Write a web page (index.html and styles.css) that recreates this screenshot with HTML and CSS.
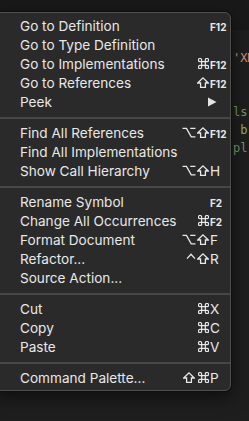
FILE: index.html
```html
<!DOCTYPE html>
<html lang="en">
<head>
    <meta charset="UTF-8">
    <meta name="viewport" content="width=device-width, initial-scale=1.0">
    <title>Editor context menu</title>
    <link rel="stylesheet" href="styles.css">
</head>
<body>
    <svg width="0" height="0" class="oculto">
        <defs>
            <path id="cmd" d="M4 9.8 V2.2 A1.8 1.8 0 1 0 2.2 4 H9.8 A1.8 1.8 0 1 0 8 2.2 V9.8 A1.8 1.8 0 1 0 9.8 8 H2.2 A1.8 1.8 0 1 0 4 9.8 Z"/>
            <path id="shift" d="M6 0.9 L11.2 6 H8.4 V10.3 H3.6 V6 H0.8 Z"/>
            <path id="opt" d="M0.3 1.4 H4.2 L9 9.9 H13.2 M8 1.4 H13.2"/>
            <path id="ctrl" d="M1 5.6 L5 1.2 L9 5.6"/>
        </defs>
    </svg>

    <div class="ventana">
        <div class="barra-pestanas"></div>
        <div class="editor">
            <div class="linea cadena">'XM</div>
            <div class="linea"> </div>
            <div class="linea"> </div>
            <div class="linea verde-gris">ls</div>
            <div class="linea verde"> b</div>
            <div class="linea verde-gris">pl</div>
        </div>

        <!-- menu contextual sobre el editor -->
        <div class="menu">
            <div class="item"><span class="etiqueta">Go to Definition</span><span class="atajo"><span class="tecla fn">F12</span></span></div>
            <div class="item"><span class="etiqueta">Go to Type Definition</span></div>
            <div class="item"><span class="etiqueta">Go to Implementations</span><span class="atajo"><span class="mod"><svg width="11" height="11" viewBox="0 0 12 12"><use href="#cmd"/></svg></span><span class="tecla fn">F12</span></span></div>
            <div class="item"><span class="etiqueta">Go to References</span><span class="atajo"><span class="mod"><svg width="12" height="11" viewBox="0 0 12 11"><use href="#shift"/></svg></span><span class="tecla fn">F12</span></span></div>
            <div class="item"><span class="etiqueta">Peek</span><span class="atajo"><svg class="flecha" width="10" height="10" viewBox="0 0 10 10"><path d="M1 0.5 L9.5 5 L1 9.5 Z" fill="#e4e4e4"/></svg></span></div>
            <div class="separador"></div>
            <div class="item"><span class="etiqueta">Find All References</span><span class="atajo"><span class="mod"><svg width="14" height="11" viewBox="0 0 13.5 11"><use href="#opt"/></svg></span><span class="mod"><svg width="12" height="11" viewBox="0 0 12 11"><use href="#shift"/></svg></span><span class="tecla fn">F12</span></span></div>
            <div class="item"><span class="etiqueta">Find All Implementations</span></div>
            <div class="item"><span class="etiqueta">Show Call Hierarchy</span><span class="atajo"><span class="mod"><svg width="14" height="11" viewBox="0 0 13.5 11"><use href="#opt"/></svg></span><span class="mod"><svg width="12" height="11" viewBox="0 0 12 11"><use href="#shift"/></svg></span><span class="tecla">H</span></span></div>
            <div class="separador"></div>
            <div class="item"><span class="etiqueta">Rename Symbol</span><span class="atajo"><span class="tecla fn">F2</span></span></div>
            <div class="item"><span class="etiqueta">Change All Occurrences</span><span class="atajo"><span class="mod"><svg width="11" height="11" viewBox="0 0 12 12"><use href="#cmd"/></svg></span><span class="tecla fn">F2</span></span></div>
            <div class="item"><span class="etiqueta">Format Document</span><span class="atajo"><span class="mod"><svg width="14" height="11" viewBox="0 0 13.5 11"><use href="#opt"/></svg></span><span class="mod"><svg width="12" height="11" viewBox="0 0 12 11"><use href="#shift"/></svg></span><span class="tecla">F</span></span></div>
            <div class="item"><span class="etiqueta">Refactor...</span><span class="atajo"><span class="mod ctrl"><svg width="10" height="11" viewBox="0 0 10 11"><use href="#ctrl"/></svg></span><span class="mod"><svg width="12" height="11" viewBox="0 0 12 11"><use href="#shift"/></svg></span><span class="tecla">R</span></span></div>
            <div class="item"><span class="etiqueta">Source Action...</span></div>
            <div class="separador"></div>
            <div class="item"><span class="etiqueta">Cut</span><span class="atajo"><span class="mod"><svg width="11" height="11" viewBox="0 0 12 12"><use href="#cmd"/></svg></span><span class="tecla">X</span></span></div>
            <div class="item"><span class="etiqueta">Copy</span><span class="atajo"><span class="mod"><svg width="11" height="11" viewBox="0 0 12 12"><use href="#cmd"/></svg></span><span class="tecla">C</span></span></div>
            <div class="item"><span class="etiqueta">Paste</span><span class="atajo"><span class="mod"><svg width="11" height="11" viewBox="0 0 12 12"><use href="#cmd"/></svg></span><span class="tecla">V</span></span></div>
            <div class="separador"></div>
            <div class="item"><span class="etiqueta">Command Palette...</span><span class="atajo"><span class="mod"><svg width="12" height="11" viewBox="0 0 12 11"><use href="#shift"/></svg></span><span class="mod"><svg width="11" height="11" viewBox="0 0 12 12"><use href="#cmd"/></svg></span><span class="tecla">P</span></span></div>
        </div>
    </div>
</body>
</html>
```

FILE: styles.css
```css
body {
    margin: 0;
    padding: 0;
    background-color: #1e1e1e;
    overflow: hidden;
}

.oculto {
    position: absolute;
}

.ventana {
    position: relative;
    width: 249px;
    height: 421px;
    overflow: hidden;
    background-color: #1e1e1e;
}

.barra-pestanas {
    height: 30px;
    background-color: #191919;
}

.editor {
    padding-top: 19px;
    padding-left: 233px;
    font-family: "DejaVu Sans Mono", monospace;
    font-size: 12px;
    line-height: 18px;
}

.linea {
    height: 18px;
    white-space: pre;
}

.cadena { color: #ce9178; }
.verde { color: #8fae5a; }
.verde-gris { color: #6f9a63; }

/* Menu contextual: se sale por la izquierda de la ventana */
.menu {
    position: absolute;
    top: 12px;
    left: -9px;
    width: 240px;
    box-sizing: border-box;
    padding: 4px 0 2px 0;
    background-color: #2a2a2a;
    border: 1px solid #505050;
    border-radius: 6px;
    box-shadow: 0 0 0 1px #0e0e0e, 0 6px 18px rgba(0, 0, 0, 0.55);
    font-family: "Inter", "Noto Sans", sans-serif;
    font-size: 13.6px;
    color: #e8e8e8;
}

.item {
    display: flex;
    align-items: baseline;
    height: 19px;
    line-height: 19px;
    padding-left: 28px;
    padding-right: 1px;
}

.etiqueta {
    flex: 1;
    white-space: nowrap;
}

.atajo {
    display: flex;
    align-items: baseline;
}

.mod {
    display: inline-flex;
    justify-content: center;
    width: 14px;
}

.mod.ctrl {
    width: 11px;
}

.mod svg {
    fill: none;
    stroke: #e8e8e8;
    stroke-width: 1.3;
    stroke-linejoin: miter;
}

.tecla {
    display: inline-block;
    width: 19px;
}

.tecla.fn {
    font-size: 10px;
    font-weight: 700;
}

.flecha {
    align-self: center;
    margin-right: 12px;
}

.separador {
    height: 2px;
    margin: 5px 0;
    background-color: #474747;
}
```
